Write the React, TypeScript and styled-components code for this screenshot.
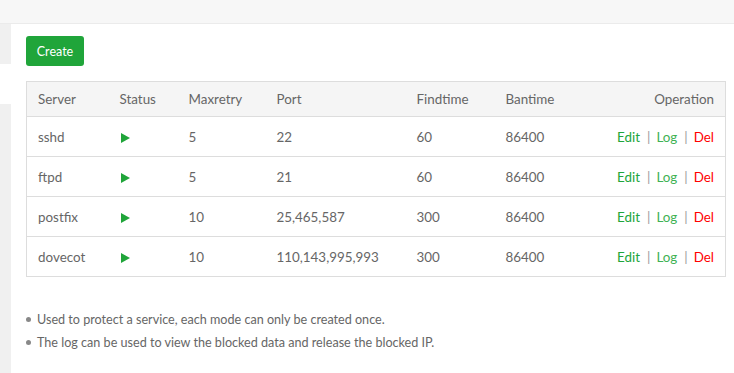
import React from "react";
import styled, { createGlobalStyle } from "styled-components";

const GlobalStyle = createGlobalStyle`
  html, body {
    margin: 0;
    padding: 0;
    background: #fff;
  }
  body {
    font-family: "Lato", "Liberation Sans", sans-serif;
    color: #666;
  }
  *, *::before, *::after {
    box-sizing: border-box;
  }
`;

const Page = styled.div`
  width: 734px;
  height: 373px;
  display: flex;
  flex-direction: column;
  overflow: hidden;
`;

const TopBar = styled.div`
  height: 24px;
  flex-shrink: 0;
  background: #f7f7f7;
  border-bottom: 1px solid #ebebeb;
`;

const Body = styled.div`
  flex: 1;
  display: flex;
  min-height: 0;
`;

const Sidebar = styled.div`
  width: 11px;
  flex-shrink: 0;
  display: flex;
  flex-direction: column;
`;

const SideBlock = styled.div<{ $active?: boolean; $grow?: boolean }>`
  height: ${(p) => (p.$grow ? "auto" : "40px")};
  flex: ${(p) => (p.$grow ? 1 : "none")};
  background: ${(p) => (p.$active ? "#fff" : "#f0f0f0")};
`;

const Main = styled.div`
  flex: 1;
  padding: 12px 8px 0 15px;
`;

const CreateButton = styled.button`
  height: 30px;
  width: 58px;
  padding: 0;
  background: #20a53a;
  color: #fff;
  border: none;
  border-radius: 3px;
  font-family: inherit;
  font-size: 12.5px;
  cursor: pointer;
`;

const Table = styled.table`
  margin-top: 15px;
  width: 700px;
  border-collapse: collapse;
  table-layout: fixed;
  border: 1px solid #ddd;
  font-size: 13.4px;
`;

const HeadCell = styled.th<{ $w?: number; $right?: boolean }>`
  width: ${(p) => (p.$w ? `${p.$w}px` : "auto")};
  height: 35px;
  padding: 0 11px;
  background: #f5f5f5;
  border-bottom: 1px solid #ddd;
  font-weight: normal;
  text-align: ${(p) => (p.$right ? "right" : "left")};
  color: #666;
`;

const Cell = styled.td<{ $right?: boolean }>`
  height: 40px;
  padding: 0 11px;
  border-bottom: 1px solid #ddd;
  text-align: ${(p) => (p.$right ? "right" : "left")};
  color: #666;
  white-space: nowrap;
`;

const PlayIcon = styled.span`
  display: inline-block;
  width: 0;
  height: 0;
  border-top: 5px solid transparent;
  border-bottom: 5px solid transparent;
  border-left: 9px solid #20a53a;
  vertical-align: middle;
  margin-left: 1px;
`;

const OpLink = styled.a<{ $tone: "edit" | "log" | "del" }>`
  text-decoration: none;
  cursor: pointer;
  color: ${(p) =>
    p.$tone === "del" ? "#f00" : p.$tone === "log" ? "#3fb254" : "#20a53a"};
`;

const Sep = styled.span`
  color: #999;
  margin: 0 6px 0 7px;
`;

const Notes = styled.ul`
  margin: 31px 0 0;
  padding: 0;
  list-style: none;
  font-size: 12.6px;
`;

const Note = styled.li`
  position: relative;
  line-height: 23px;
  padding-left: 11px;
  color: #666;
  &::before {
    content: "";
    position: absolute;
    left: 0;
    top: 9px;
    width: 5px;
    height: 5px;
    border-radius: 50%;
    background: #888;
  }
`;

const rows = [
  { server: "sshd", maxretry: 5, port: "22", findtime: 60, bantime: 86400 },
  { server: "ftpd", maxretry: 5, port: "21", findtime: 60, bantime: 86400 },
  { server: "postfix", maxretry: 10, port: "25,465,587", findtime: 300, bantime: 86400 },
  { server: "dovecot", maxretry: 10, port: "110,143,995,993", findtime: 300, bantime: 86400 },
];

export default function App() {
  return (
    <Page>
      <GlobalStyle />
      <TopBar />
      <Body>
        <Sidebar>
          <SideBlock />
          <SideBlock $active />
          <SideBlock $grow />
        </Sidebar>
        <Main>
          <CreateButton>Create</CreateButton>
          <Table>
            <thead>
              <tr>
                <HeadCell $w={82}>Server</HeadCell>
                <HeadCell $w={69}>Status</HeadCell>
                <HeadCell $w={88}>Maxretry</HeadCell>
                <HeadCell $w={140}>Port</HeadCell>
                <HeadCell $w={89}>Findtime</HeadCell>
                <HeadCell $w={100}>Bantime</HeadCell>
                <HeadCell $right>Operation</HeadCell>
              </tr>
            </thead>
            <tbody>
              {rows.map((r) => (
                <tr key={r.server}>
                  <Cell>{r.server}</Cell>
                  <Cell>
                    <PlayIcon />
                  </Cell>
                  <Cell>{r.maxretry}</Cell>
                  <Cell>{r.port}</Cell>
                  <Cell>{r.findtime}</Cell>
                  <Cell>{r.bantime}</Cell>
                  <Cell $right>
                    <OpLink $tone="edit">Edit</OpLink>
                    <Sep>|</Sep>
                    <OpLink $tone="log">Log</OpLink>
                    <Sep>|</Sep>
                    <OpLink $tone="del">Del</OpLink>
                  </Cell>
                </tr>
              ))}
            </tbody>
          </Table>
          <Notes>
            <Note>Used to protect a service, each mode can only be created once.</Note>
            <Note>The log can be used to view the blocked data and release the blocked IP.</Note>
          </Notes>
        </Main>
      </Body>
    </Page>
  );
}
